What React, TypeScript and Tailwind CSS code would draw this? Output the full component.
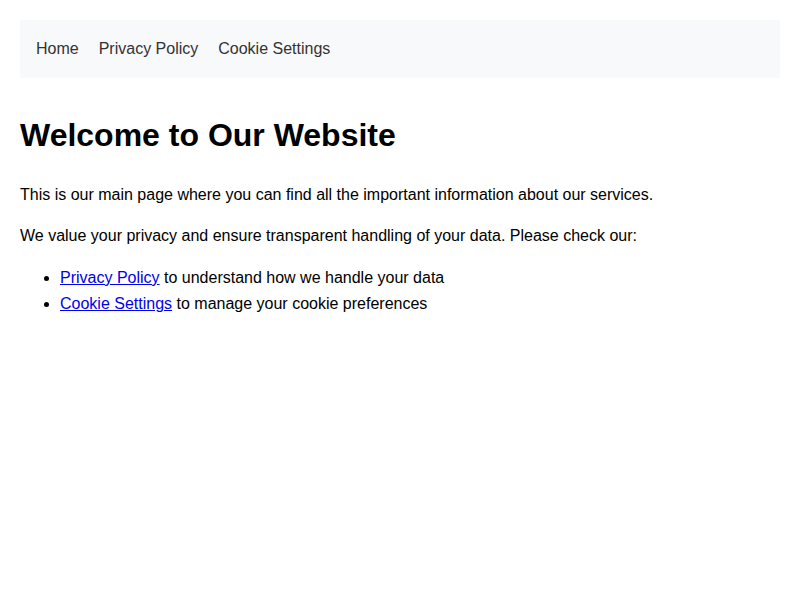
export default function App() {
  return (
    <div className="min-h-[600px] bg-white p-5 font-['Liberation_Sans',Arial,sans-serif] text-base leading-[1.6] text-black">
      {/* Top navigation */}
      <nav className="flex bg-[#f8f9fa] p-4">
        <a href="#" className="mr-5 text-[#333]">Home</a>
        <a href="#" className="mr-5 text-[#333]">Privacy Policy</a>
        <a href="#" className="mr-5 text-[#333]">Cookie Settings</a>
      </nav>

      <main>
        <h1 className="mt-8 mb-[21px] text-[32px] font-bold leading-[1.6]">
          Welcome to Our Website
        </h1>
        <p className="my-4">
          This is our main page where you can find all the important information about our services.
        </p>
        <p className="my-4">
          We value your privacy and ensure transparent handling of your data. Please check our:
        </p>
        <ul className="my-4 list-disc pl-10">
          <li>
            <a href="#" className="text-[#0000ee] underline">Privacy Policy</a> to understand how we handle your data
          </li>
          <li>
            <a href="#" className="text-[#0000ee] underline">Cookie Settings</a> to manage your cookie preferences
          </li>
        </ul>
      </main>
    </div>
  );
}
